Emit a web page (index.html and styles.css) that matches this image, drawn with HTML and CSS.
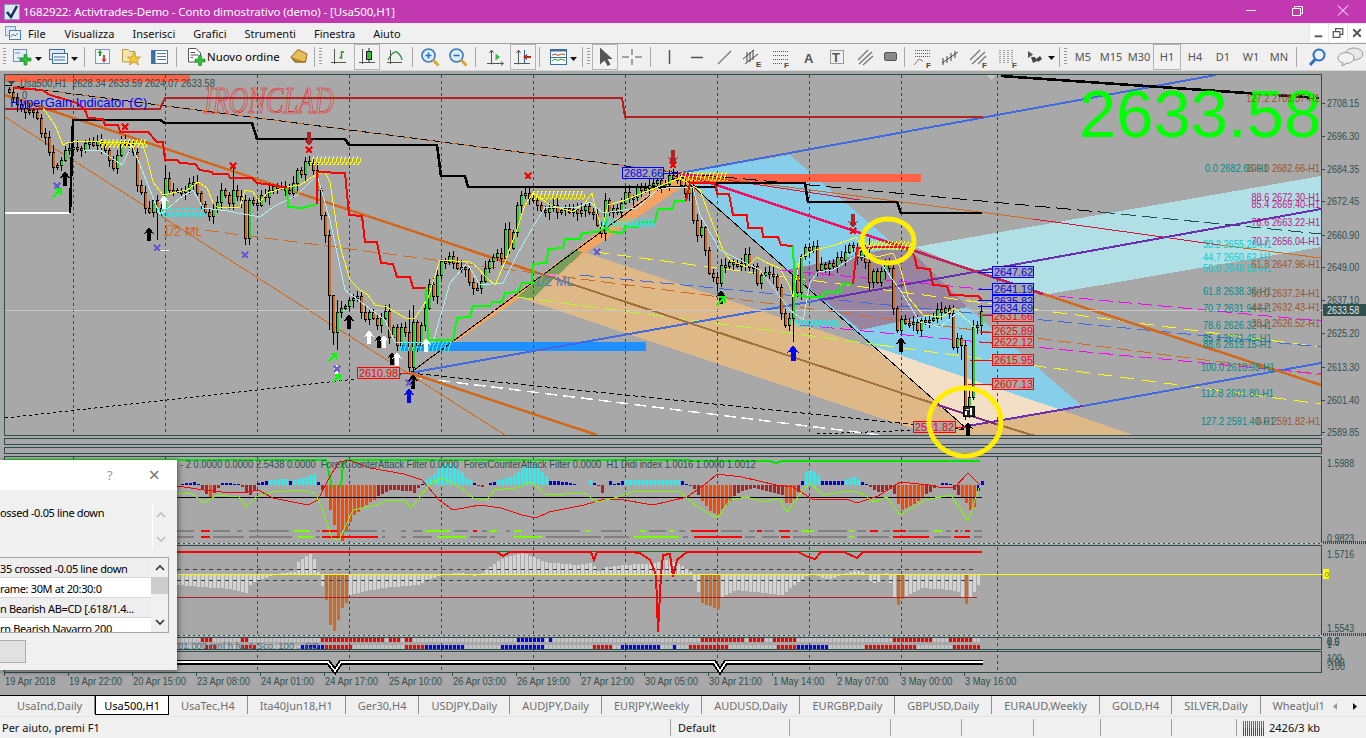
FILE: index.html
```html
<!DOCTYPE html>
<html lang="it">
<head>
<meta charset="utf-8">
<title>1682922: Activtrades-Demo - Conto dimostrativo (demo) - [Usa500,H1]</title>
<link rel="stylesheet" href="styles.css">
</head>
<body>
<div class="app">
  <header class="titlebar">
    <svg class="appicon" width="16" height="16" viewBox="0 0 16 16"><rect x="0.5" y="0.5" width="15" height="15" fill="#dfe6ee" stroke="#8aa0b8"/><path d="M3 8 L7 13 L13 2" fill="none" stroke="#13355e" stroke-width="2.6"/></svg>
    <span class="title">1682922: Activtrades-Demo - Conto dimostrativo (demo) - [Usa500,H1]</span>
    <span class="winctl">
      <svg width="46" height="23" viewBox="0 0 46 23"><path d="M18 10.5H28" stroke="#fff"/></svg>
      <svg width="46" height="23" viewBox="0 0 46 23"><path d="M18.5 8.5H26.5V15.5H18.5Z M20.5 8V6.5H28.5V13.5H27" fill="none" stroke="#fff"/></svg>
      <svg width="46" height="23" viewBox="0 0 46 23"><path d="M18 5.5 L28 15.5 M28 5.5 L18 15.5" stroke="#fff"/></svg>
    </span>
  </header>
  <nav class="menubar">
    <svg class="docicon" width="16" height="16" viewBox="0 0 16 16"><rect x="0.5" y="1.5" width="10" height="9" fill="#dbe8f6" stroke="#7c9cc4"/><rect x="4.5" y="5.5" width="11" height="9" fill="#eef4fb" stroke="#4f7fb8"/><path d="M6 12 L8 9 L10 11 L13 8" fill="none" stroke="#4f7fb8"/></svg>
    <span class="menu m1">File</span><span class="menu m2">Visualizza</span><span class="menu">Inserisci</span><span class="menu">Grafici</span><span class="menu">Strumenti</span><span class="menu">Finestra</span><span class="menu">Aiuto</span>
    <span class="mdictl">
      <svg width="19" height="18" viewBox="0 0 19 18"><path d="M5 12.5H13" stroke="#555" stroke-width="2"/></svg>
      <svg width="19" height="18" viewBox="0 0 19 18"><path d="M4.5 7.5H11.5V13.5H4.5Z M7 7V4.5H14.5V10.5H12" fill="none" stroke="#555" stroke-width="1.3"/></svg>
      <svg width="19" height="18" viewBox="0 0 19 18"><path d="M5.5 5 L13.5 13 M13.5 5 L5.5 13" stroke="#555" stroke-width="2"/></svg>
    </span>
  </nav>
  <div class="toolbar">
    <span class="grip"></span>
    <svg width="35" height="26" viewBox="0 0 35 26"><rect x="5.5" y="5.5" width="13" height="12" fill="#e6eef8" stroke="#6f8fb5"/><path d="M7 9H12M9 14H15" stroke="#6f8fb5"/><path d="M14 12H18V8.5H21V12H25V15H21V19H18V15H14Z" fill="#2fbf3a" stroke="#1d8a26" stroke-width="0.7" transform="translate(-2 2)"/><path d="M27 13H34L30.5 17Z" fill="#111"/></svg>
    <svg width="38" height="26" viewBox="0 0 38 26"><rect x="6.5" y="5.5" width="15" height="10" fill="#dfe9f5" stroke="#3e6da5"/><rect x="9.5" y="9.5" width="15" height="10" fill="#eef4fb" stroke="#3e6da5"/><path d="M11 13H22M11 16H22" stroke="#3e6da5"/><path d="M28 13H35L31.5 17Z" fill="#111"/></svg>
    <span class="sep"></span>
    <svg width="26" height="26" viewBox="0 0 26 26"><rect x="6.5" y="5.5" width="14" height="14" fill="#f2f6fb" stroke="#7c9cc4"/><path d="M10 12V9H8.5L11 6L13.5 9H12V12Z" fill="#1f9e2a"/><path d="M14 11V15H12.5L15 19L17.500 15H16V11Z" fill="#d0402a"/></svg>
    <svg width="30" height="26" viewBox="0 0 30 26"><path d="M7.500 5.500H13L15 7.500H20V18H7.500Z" fill="#f3e3a8" stroke="#b59a4c"/><path d="M19 8.500L21 13H25.500L22 16L23.500 21L19 18L14.500 21L16 16L12.500 13H17Z" fill="#f5c83a" stroke="#b58b1c" stroke-width="0.7"/></svg>
    <svg width="28" height="26" viewBox="0 0 28 26"><rect x="6.500" y="6.500" width="16" height="13" fill="#fff" stroke="#58779c"/><rect x="6.500" y="6.500" width="4" height="13" fill="#3e6da5"/><path d="M12 9.500H21M12 12.500H21M12 15.500H21" stroke="#58779c"/></svg>
    <span class="sep"></span>
    <svg width="26" height="26" viewBox="0 0 26 26"><path d="M7.500 4.500H15L19.500 9V18H7.500Z" fill="#fff" stroke="#555"/><path d="M9.500 8.500H14M9.500 11H17M9.500 13.500H12" stroke="#555"/><path d="M14 15H17.500V11.500H20.500V15H24V18H20.500V21.500H17.500V18H14Z" fill="#2fbf3a" stroke="#1d8a26" stroke-width="0.7"/></svg>
    <span class="order">Nuovo ordine</span>
    <svg width="25" height="26" viewBox="0 0 25 26"><path d="M5 13 L12 5.500 L21 10 L19.500 18 L9 18Z" fill="#e6bd58" stroke="#8d6a1e"/><path d="M5 13 L9 18 L19.500 18" fill="#b98a2a" stroke="#8d6a1e"/></svg>
    <span class="sep"></span>
    <span class="grip"></span>
    <svg width="30" height="26" viewBox="0 0 30 26"><path d="M10.500 5V20M7 18.500H22" stroke="#555" fill="none"/><path d="M17.500 7V15M15.500 13.500H17.500M17.500 8H20" stroke="#1e9a2a" fill="none" stroke-width="1.4"/></svg>
    <span class="btn act"><svg width="26" height="26" viewBox="0 0 26 26"><path d="M8.500 5V20M5 18.500H21" stroke="#555" fill="none"/><path d="M15 4V18" stroke="#222"/><rect x="12.500" y="7.500" width="5" height="8" fill="#2fbf3a" stroke="#222"/></svg></span>
    <svg width="29" height="26" viewBox="0 0 29 26"><path d="M10.500 6V20M7 18.500H22" stroke="#555" fill="none"/><path d="M8 16 Q14 5 18 9 T22 16" stroke="#1e8a2a" fill="none" stroke-width="1.2"/></svg>
    <span class="sep"></span>
    <svg width="27" height="26" viewBox="0 0 27 26"><circle cx="11.500" cy="11.500" r="6.500" fill="#dcecfb" stroke="#3e78b8" stroke-width="1.600"/><path d="M8.500 11.500H14.500M11.500 8.500V14.500" stroke="#2a6fb8" stroke-width="1.600"/><path d="M16 16L21.500 21.500" stroke="#d9a62e" stroke-width="3"/></svg>
    <svg width="28" height="26" viewBox="0 0 28 26"><circle cx="12.500" cy="11.500" r="6.500" fill="#dcecfb" stroke="#3e78b8" stroke-width="1.600"/><path d="M9.500 11.500H15.500" stroke="#2a6fb8" stroke-width="1.600"/><path d="M17 16L22.500 21.500" stroke="#d9a62e" stroke-width="3"/></svg>
    <span class="sep"></span>
    <svg width="30" height="26" viewBox="0 0 30 26"><path d="M11.500 7V20.500M7 19.500H23M9.500 9L11.500 6L13.500 9M21 17.500L23.500 19.500L21 21.500" stroke="#555" fill="none"/><path d="M15.500 9.500L20 13L15.500 16.500Z" fill="#2fbf3a"/></svg>
    <span class="btn act"><svg width="26" height="26" viewBox="0 0 26 26"><path d="M8.500 7V20.500M4 19.500H20M6.500 9L8.500 6L10.500 9" stroke="#555" fill="none"/><path d="M14.500 6V20" stroke="#2a5f9e"/><path d="M21 12H17V10L13 13L17 16V14H21Z" fill="#b5301a"/></svg></span>
    <span class="sep"></span>
    <svg width="35" height="26" viewBox="0 0 35 26"><rect x="6.500" y="5.500" width="16" height="15" fill="#fff" stroke="#3e6da5"/><rect x="6.500" y="5.500" width="16" height="2" fill="#3e6da5"/><path d="M8 11 L11 10 L14 11.500 L17 10 L21 10.500" stroke="#c0401a" fill="none"/><path d="M8 17 L11 15 L14 16.500 L17 15 L21 16.500" stroke="#1e9a2a" fill="none"/><path d="M6.500 13.500H22.500" stroke="#3e6da5"/><path d="M26 13H33L29.500 17Z" fill="#111"/></svg>
    <span class="sep"></span>
    <span class="grip"></span>
    <span class="btn act"><svg width="26" height="26" viewBox="0 0 26 26"><path d="M8 3.500V20.500L12.500 16.500L15.500 22L18.500 20.500L15.500 15H20.500Z" fill="#555"/></svg></span>
    <svg width="29" height="26" viewBox="0 0 29 26"><path d="M14 5V11M14 15V21M4 13H11M17 13H24" stroke="#555"/></svg>
    <span class="sep"></span>
    <svg width="28" height="26" viewBox="0 0 28 26"><path d="M14.500 6V20" stroke="#555" stroke-width="1.500"/></svg>
    <svg width="28" height="26" viewBox="0 0 28 26"><path d="M8 13.500H20" stroke="#555" stroke-width="1.500"/></svg>
    <svg width="28" height="26" viewBox="0 0 28 26"><path d="M7 20L20 7" stroke="#777" stroke-width="1.300"/></svg>
    <svg width="28" height="26" viewBox="0 0 28 26"><path d="M4 15L15 6M6 20L19 10M8 8V18M11 8V18M14 6V16" stroke="#444" fill="none"/><text class="tool-l" x="17" y="23">E</text></svg>
    <svg width="28" height="26" viewBox="0 0 28 26"><path d="M6 7.500H21M6 11.500H21M6 15.500H21M6 19.500H16" stroke="#555" stroke-dasharray="1 1" fill="none"/><text class="tool-l" x="17" y="24">F</text></svg>
    <svg width="28" height="26" viewBox="0 0 28 26"><text class="tool-a" x="9" y="19">A</text></svg>
    <svg width="28" height="26" viewBox="0 0 28 26"><rect x="7.500" y="6.500" width="13" height="13" fill="none" stroke="#444" stroke-dasharray="1 1"/><text class="tool-a" x="9" y="18">T</text></svg>
    <svg width="28" height="26" viewBox="0 0 28 26"><path d="M7 16L17 6M8 20L21 8M12 21L22 12" stroke="#777" stroke-width="1.300"/></svg>
    <svg width="22" height="26" viewBox="0 0 22 26"><rect x="5.500" y="8.500" width="12" height="8" rx="1.500" fill="#8a8a8a" stroke="#555"/></svg>
    <span class="sep"></span>
    <svg width="27" height="26" viewBox="0 0 27 26"><path d="M6 6.500H21M6 9.500H21M6 12.500H21" stroke="#555" stroke-dasharray="1 1"/><path d="M5 21L10 15L14 17" stroke="#777" fill="none"/><text class="tool-l" x="17" y="24">F</text></svg>
    <svg width="28" height="26" viewBox="0 0 28 26"><path d="M6 19L22 8M7 14V21M11 12V19M15 9V17M19 7V14" stroke="#444" fill="none"/></svg>
    <svg width="29" height="26" viewBox="0 0 29 26"><path d="M6 16L16 6M8 20L21 8M14 20L22 12" stroke="#777" stroke-width="1.300"/><text class="tool-l" x="18" y="24">F</text></svg>
    <svg width="28" height="26" viewBox="0 0 28 26"><path d="M7 6V20M11 6V20M15 6V20M19 6V20" stroke="#555" stroke-dasharray="1 1"/><text class="tool-l" x="19" y="24">F</text></svg>
    <svg width="35" height="26" viewBox="0 0 35 26"><path d="M7 7L12 10.500L7 14Z" fill="#555"/><path d="M10 13H14L16 17L12 19Z M15 15L19 12L21 15L17 18Z" fill="#444"/><path d="M27 12H34L30.500 16Z" fill="#111"/></svg>
    <span class="sep"></span>
    <span class="grip"></span>
    <span class="tf">M5</span><span class="tf">M15</span><span class="tf">M30</span><span class="tf act">H1</span><span class="tf">H4</span><span class="tf">D1</span><span class="tf">W1</span><span class="tf">MN</span>
    <span class="sep"></span>
    <svg width="34" height="26" viewBox="0 0 34 26"><circle cx="18" cy="11" r="5.500" fill="#eaf3fd" stroke="#2a6fc4" stroke-width="2"/><path d="M14 15.500L9 21" stroke="#2a6fc4" stroke-width="3"/></svg>
    <svg width="31" height="26" viewBox="0 0 31 26"><ellipse cx="19" cy="10" rx="9" ry="6" fill="#e8e8e8" stroke="#9a9a9a"/><ellipse cx="11" cy="14" rx="8" ry="5.500" fill="#f2f2f2" stroke="#9a9a9a"/><path d="M8 19L7 22L12 19" fill="#f2f2f2" stroke="#9a9a9a"/></svg>
  </div>

  <main class="chart">
    <svg class="canvas" width="1366" height="624" viewBox="0 71 1366 624">
      <defs>
        <symbol id="up" viewBox="0 0 12 16"><path d="M6 0L12 8L8.500 6.500V16H3.500V6.500L0 8Z"/></symbol>
        <symbol id="down" viewBox="0 0 12 16"><path d="M6 16L12 8L8.500 9.500V0H3.500V9.500L0 8Z"/></symbol>
        <symbol id="xm" viewBox="0 0 8 8"><path d="M1 1L7 7M7 1L1 7" stroke="currentColor" stroke-width="2" fill="none"/></symbol>
        <symbol id="ne" viewBox="0 0 12 12"><path d="M1 11L10 2M3 2H10V9" stroke="#00ff00" stroke-width="2" fill="none"/></symbol>
        <pattern id="hy" width="4" height="9" patternUnits="userSpaceOnUse"><path d="M0 9L3 0" stroke="#ffff00" stroke-width="1.300"/></pattern>
        <pattern id="hc" width="4" height="9" patternUnits="userSpaceOnUse"><path d="M0 9L3 0" stroke="#19f0f0" stroke-width="1.300"/></pattern>
        <clipPath id="mainclip"><rect x="5" y="75" width="1316" height="360"/></clipPath>
      </defs>

      <g class="frames">
        <rect x="4.500" y="74.500" width="1317" height="361"/>
        <rect x="4.500" y="438.500" width="1317" height="6"/>
        <rect x="4.500" y="447.500" width="1317" height="6"/>
        <rect x="4.500" y="456.500" width="1317" height="87"/>
        <rect x="4.500" y="545.500" width="1317" height="90"/>
        <rect x="4.500" y="637.500" width="1317" height="12"/>
        <rect x="4.500" y="651.500" width="1317" height="21"/>
      </g>

      <g clip-path="url(#mainclip)">
        <rect x="5" y="75" width="185" height="7" fill="#ff6347"/>
        <polygon points="915,247 1321,176 1321,247 1043,295 966,268" fill="#b0e0e6"/>
        <polygon points="680,173 790,155 1081,405 1061,410 870,345" fill="#87ceeb"/>
        <polygon points="583,252 1061,410 1136,436 935,436 517,297" fill="#deb887"/>
        <polygon points="870,345 1061,410 965,427" fill="#f2dfc6"/>
        <polygon points="787,270 882,250 910,250 967,307 860,330" fill="#9a85a0"/>
        <polygon points="410,373 677,172 692,180" fill="#f4a460"/>
        <polygon points="517,297 573,250 583,252 533,298" fill="#7ba05b"/>
        <rect x="400" y="342" width="246" height="9" fill="#1e90ff"/>
        <rect x="685" y="174" width="236" height="8" fill="#ff6347"/>
      </g>

      <g class="grid" id="grid"></g>

      <g clip-path="url(#mainclip)" fill="none">
        <path class="ln" d="M5 85L680 173" stroke="#d2691e"/>
        <path class="ln" d="M5 85L680 173" stroke="#000" stroke-dasharray="7 5"/>
        <path class="ln" d="M680 173L1033 219" stroke="#d2691e"/>
        <path class="ln" d="M1033 219L1220 245" stroke="#dc143c"/>
        <path class="ln" d="M1220 245L1321 258" stroke="#d2691e"/>
        <path class="ln" d="M680 173L1100 212" stroke="#000" stroke-dasharray="15 6"/>
        <path class="ln" d="M1100 212L1321 234" stroke="#1f4f4f" stroke-dasharray="15 6"/>
        <path class="ln" d="M5 117L505 435" stroke="#d2691e"/>
        <path class="ln" d="M5 418L410 373" stroke="#000" stroke-dasharray="3 3"/>
        <path class="ln" d="M410 373L968 430" stroke="#000" stroke-dasharray="5 3"/>
        <path class="ln" d="M817 434L968 428" stroke="#000" stroke-dasharray="3 3"/>
        <path class="ln2" d="M420 378L880 435" stroke="#fff" stroke-dasharray="12 6"/>
        <path class="ln" d="M410 373L678 175" stroke="#000"/>
        <path class="ln" d="M680 175L968 430" stroke="#000"/>
        <path class="ln" d="M165 225L1321 375" stroke="#d2691e" stroke-dasharray="14 6"/>
        <path class="ln" d="M595 252L1321 347" stroke="#ffff00" stroke-dasharray="14 8"/>
        <path class="ln" d="M517 297L880 345" stroke="#adff2f" stroke-dasharray="16 6"/>
        <path class="ln" d="M880 345L1321 404" stroke="#ffff00" stroke-dasharray="14 8"/>
        <path class="ln" d="M580 275L1321 347" stroke="#4169e1" stroke-dasharray="14 6"/>
        <path class="ln" d="M780 270L1321 321" stroke="#ff00ff" stroke-dasharray="14 6"/>
        <path class="ln" d="M800 325L1321 374" stroke="#ff00ff" stroke-dasharray="14 6"/>
        <path class="ln" d="M680 173L860 200" stroke="#dc143c"/>
        <path class="ln2" d="M540 275H558" stroke="#ff7fd0"/>
        <path class="thick" d="M680 173L1216 75" stroke="#4169e1"/>
        <path class="thick" d="M410 373L820 300" stroke="#4169e1"/>
        <path class="thick" d="M820 300L1321 209" stroke="#6a2fb0"/>
        <path class="thick" d="M962 427L1083 406" stroke="#6a2fb0"/>
        <path class="thick" d="M1083 406L1321 363" stroke="#4169e1"/>
        <path class="wide" d="M5 95L535 272" stroke="#d2691e"/>
        <path class="thick" d="M535 272L938 405" stroke="#a0703a"/>
        <path class="thick" d="M938 405L996 424" stroke="#7a2a7a"/>
        <path class="thick" d="M996 424L1035 436" stroke="#a0703a"/>
        <path class="wide" d="M680 173L915 251" stroke="#ee1166"/>
        <path class="wide" d="M915 251L1043 294" stroke="#c0245c"/>
        <path class="wide" d="M1043 294L1321 385" stroke="#d2691e"/>
        <path class="wide" d="M410 373L597 435" stroke="#d2691e"/>
        <path class="thick" d="M5 109H160L165 98H622L625 117H983" stroke="#b22222"/>
        <path class="wide" d="M1001 76L1319 98" stroke="#000"/>
      </g>

      <text class="bigprice" x="1079" y="137">2633.58</text>
      <path class="ln" d="M5 310H1322" stroke="#c8c8c8" fill="none"/>

      <g fill="none">
        <path class="thick" d="M5 213H70" stroke="#fff"/>
        <path class="wide" d="M70 213L73 120H160L165 123H252L257 139H345L349 145H437L441 176H465L468 187H715L717 183H805L808 202H897L901 213H982" stroke="#000"/>
      </g>

      <g id="candles"></g>

      <g fill="none" class="ma">
        <polyline stroke="#ffff00" points="43,108 55,125 63,145 67,143 80,141 100,142 127,143 142,143 147,158 153,182 163,195 187,190 198,182 207,188 213,203 217,207 240,207 245,190 253,192 260,202 267,193 287,187 300,185 315,175 325,172 330,182 338,235 342,253 350,280 360,290 368,295 375,305 387,307 405,318 415,318 428,298 440,260 470,262 477,267 487,278 495,285 505,262 515,235 525,205 533,193 543,200 550,205 560,208 573,212 585,203 592,193 595,207 602,230 608,205 625,200 650,190 680,178 700,190 710,217 723,250 730,260 747,267 757,257 765,262 780,268 790,287 793,297 800,258 815,250 835,245 857,237 862,250 877,257 893,253 900,267 908,297 923,315 943,317 955,308 967,320 977,330"/>
        <polyline stroke="#afeeee" points="83,150 100,150 122,165 132,145 160,215 180,198 193,190 203,208 220,210 233,212 260,217 273,207 297,195 317,175 330,220 345,290 385,320 395,342 433,342 450,283 467,263 480,285 503,283 518,253 533,227 545,207 575,208 590,202 603,213 637,208 657,190 670,187 693,188 700,215 720,250 760,270 790,310 803,320 810,283 818,272 833,270 857,255 880,262 900,290 920,322 940,327 957,313 970,322"/>
      </g>

      <g fill="none" class="steps">
        <polyline stroke="#ff0000" points="13,88 42,90 50,95 67,100 77,103 85,110 88,118 103,119 105,125 118,125 120,132 148,132 157,142 163,142 165,160 177,160 180,163 195,164 200,170 212,172 213,174 228,174 230,178 252,178 257,183 272,185 287,188"/>
        <polyline stroke="#00ff00" points="287,188 288,207 302,208 317,204"/>
        <polyline stroke="#ff0000" points="317,204 317,172 345,173 349,215 362,216 365,242 377,242 381,263 393,264 397,277 410,277 413,288 426,288"/>
        <polyline stroke="#00ff00" points="426,288 428,340 453,340 457,318 470,317 473,306 490,306 493,302 502,302 505,293 518,292 522,283 532,283 533,264 547,263 548,249 563,248 565,239 580,239 582,233 597,232 607,227 610,232 623,233 625,227 638,227 640,222 655,222 658,209 672,209 675,201 686,201"/>
        <polyline stroke="#ff0000" points="686,201 690,183 715,183 717,194 729,194 733,215 747,215 748,228 762,228 763,237 778,237 781,245 793,246"/>
        <polyline stroke="#00ff00" points="793,246 795,295 808,297 822,297 825,292 840,292 842,284 853,284"/>
        <polyline stroke="#ff0000" points="853,284 857,248 887,247 910,248 915,258 917,268 930,269 933,285 947,286 950,295 978,296 982,300"/>
      </g>

      <g>
        <rect x="100" y="139" width="47" height="9" fill="url(#hy)"/>
        <rect x="310" y="156" width="51" height="9" fill="url(#hy)"/>
        <rect x="532" y="191" width="53" height="9" fill="url(#hy)"/>
        <rect x="680" y="172" width="48" height="9" fill="url(#hy)"/>
        <rect x="866" y="241" width="45" height="9" fill="url(#hy)"/>
        <rect x="157" y="208" width="48" height="9" fill="url(#hc)"/>
        <rect x="600" y="218" width="55" height="9" fill="url(#hc)"/>
        <rect x="795" y="319" width="45" height="9" fill="url(#hc)"/>
        <rect x="400" y="342" width="52" height="9" fill="url(#hc)"/>
      </g>

      <g class="blk">
        <use href="#up" x="59" y="171" width="12" height="15"/>
        <use href="#up" x="143" y="227" width="12" height="14"/>
        <use href="#up" x="343" y="314" width="12" height="15"/>
        <use href="#up" x="407" y="374" width="12" height="15"/>
        <use href="#up" x="715" y="290" width="12" height="14"/>
        <use href="#up" x="895" y="337" width="12" height="15"/>
        <use href="#up" x="962" y="422" width="12" height="14"/>
        <use href="#up" x="374" y="335" width="10" height="13"/>
        <use href="#up" x="387" y="352" width="10" height="13"/>
      </g>
      <g class="blu">
        <use href="#up" x="403" y="388" width="12" height="15"/>
        <use href="#up" x="787" y="345" width="12" height="16"/>
      </g>
      <g class="wht">
        <use href="#up" x="158" y="195" width="12" height="14"/>
        <use href="#up" x="363" y="330" width="12" height="14"/>
        <use href="#up" x="378" y="335" width="12" height="13"/>
        <use href="#up" x="391" y="352" width="12" height="14"/>
        <use href="#up" x="420" y="338" width="12" height="14"/>
        <use href="#up" x="331" y="365" width="11" height="9"/>
      </g>
      <g class="drd">
        <use href="#down" x="303" y="132" width="12" height="14"/>
        <use href="#down" x="667" y="150" width="12" height="14"/>
        <use href="#down" x="847" y="214" width="12" height="14"/>
      </g>
      <g class="xr">
        <use href="#xm" x="121" y="123" width="8" height="8"/>
        <use href="#xm" x="229" y="162" width="8" height="8"/>
        <use href="#xm" x="305" y="146" width="8" height="8"/>
        <use href="#xm" x="524" y="172" width="8" height="8"/>
        <use href="#xm" x="669" y="161" width="8" height="8"/>
        <use href="#xm" x="849" y="227" width="8" height="8"/>
      </g>
      <g class="xp">
        <use href="#xm" x="53" y="182" width="8" height="8"/>
        <use href="#xm" x="153" y="244" width="8" height="8"/>
        <use href="#xm" x="241" y="251" width="8" height="8"/>
        <use href="#xm" x="593" y="248" width="8" height="8"/>
        <use href="#xm" x="333" y="365" width="8" height="8"/>
        <use href="#xm" x="405" y="379" width="8" height="8"/>
      </g>
      <use href="#ne" x="52" y="187" width="11" height="11"/>
      <use href="#ne" x="328" y="352" width="10" height="10"/>
      <use href="#ne" x="332" y="373" width="10" height="10"/>
      <use href="#ne" x="716" y="295" width="11" height="11"/>
      <path class="ln" d="M161 250H169" stroke="#fff" fill="none"/>

      <polygon points="986,75 996,75 991,80" fill="#c4c4c4"/>
      <polygon points="8,81 15,81 11.500,85" fill="#2f4f4f"/>
      <text class="legend" x="20" y="87">Usa500,H1  2628.34 2633.59 2624.07 2633.58</text>
      <text class="legend" x="22" y="99">0</text>
      <text class="hg" x="10" y="107">HyperGain Indicator (C)</text>
      <text class="iron" x="204" y="113" textLength="130" lengthAdjust="spacingAndGlyphs">IRONCLAD</text>
      <text class="mlo" x="163" y="236">1/2 ML</text>
      <text class="mlb" x="534" y="286">1/2 ML</text>

      <g class="fib">
        <text class="ft" x="1205" y="172">0.0 2682.66-H1</text>
        <text class="fc" x="1203" y="248">38.2 2655.28-H1</text>
        <text class="fc" x="1203" y="261">44.7 2650.62-H1</text>
        <text class="fc" x="1203" y="272">50.0 2646.82-H1</text>
        <text class="ft" x="1203" y="295">61.8 2638.36-H1</text>
        <text class="ft" x="1203" y="312">70.7 2631.94-H1</text>
        <text class="ft" x="1203" y="329">78.6 2626.32-H1</text>
        <text class="ft" x="1203" y="342">85.4 2621.45-H1</text>
        <text class="ft" x="1203" y="348">88.6 2619.15-H1</text>
        <text class="ft" x="1201" y="371">100.0 2610.98-H1</text>
        <text class="ft" x="1201" y="397">112.8 2601.80-H1</text>
        <text class="ft" x="1201" y="425">127.2 2591.40-H1</text>
        <text class="fs e" x="1320" y="102">127.2 2708.37-H1</text>
        <text class="fs e" x="1320" y="172">100.0 2682.66-H1</text>
        <text class="fm e" x="1320" y="201">88.6 2672.30-H1</text>
        <text class="fm e" x="1320" y="208">85.4 2669.40-H1</text>
        <text class="fm e" x="1320" y="226">78.6 2663.22-H1</text>
        <text class="fm e" x="1320" y="245">70.7 2656.04-H1</text>
        <text class="fs e" x="1320" y="268">61.8 2647.96-H1</text>
        <text class="fs e" x="1320" y="297">50.0 2637.24-H1</text>
        <text class="fs e" x="1320" y="311">44.7 2632.43-H1</text>
        <text class="fs e" x="1320" y="327">38.2 2626.52-H1</text>
        <text class="fs e" x="1320" y="425">0.0 2591.82-H1</text>
      </g>

      <g fill="none" class="conn">
        <path d="M978 272H992M978 289H992M978 300H992M978 306H992" stroke="#0000ff"/>
        <path d="M980 315H992M980 332H992M980 342H992M970 360H992M968 384H992M956 427H966M400 373H410" stroke="#ff0000"/>
        <path d="M664 173H680" stroke="#0000ff"/>
      </g>
      <g class="pboxes">
        <rect class="bb" x="992.500" y="295.500" width="41" height="11"/><text class="tb" x="994" y="305">2635.82</text>
        <rect class="bb" x="992.500" y="266.500" width="41" height="11"/><text class="tb" x="994" y="276">2647.62</text>
        <rect class="bb" x="992.500" y="283.500" width="41" height="11"/><text class="tb" x="994" y="293">2641.19</text>
        <rect class="rb" x="992.500" y="310.500" width="41" height="11"/><text class="tr" x="994" y="320">2631.66</text>
        <rect class="bb" x="992.500" y="302.500" width="41" height="11"/><text class="tb" x="994" y="312">2634.69</text>
        <rect class="rb" x="992.500" y="325.500" width="41" height="11"/><text class="tr" x="994" y="335">2625.89</text>
        <rect class="rb" x="992.500" y="336.500" width="41" height="11"/><text class="tr" x="994" y="346">2622.12</text>
        <rect class="rb" x="992.500" y="354.500" width="41" height="11"/><text class="tr" x="994" y="364">2615.95</text>
        <rect class="rb" x="992.500" y="378.500" width="41" height="11"/><text class="tr" x="994" y="388">2607.13</text>
        <rect class="bb" x="622.500" y="167.500" width="41" height="11"/><text class="tb" x="624" y="177">2682.66</text>
        <rect class="rb" x="357.500" y="367.500" width="42" height="11"/><text class="tr" x="359" y="377">2610.98</text>
        <rect class="rb" x="913.500" y="421.500" width="42" height="11"/><text class="tr" x="915" y="431">2591.82</text>
      </g>
      <ellipse class="ring" cx="888" cy="241" rx="26" ry="22"/>
      <ellipse class="ring" cx="965" cy="422" rx="36" ry="34"/>

      <rect x="963.500" y="406.500" width="11" height="10" fill="#222" stroke="#000"/>
      <path d="M965 415V411H967V415ZM970 415V408H972V415ZM966 409H969V410H966Z" fill="#fff"/>

      <g id="w1"></g>
      <path class="thick" d="M5 460H326L332 487M341 487L343 464L347 460H680L700 461H770L776 463L782 461H980" stroke="#00e600" fill="none"/>
      <path class="ln" d="M5 497H982" stroke="#000" fill="none"/>
      <polyline class="ma" fill="none" stroke="#ff0000" points="177,486 204,490 222,492 242,493 258,490 273,498 308,505 318,500 329,478 339,462 349,460 370,468 404,474 422,480 439,500 453,510 480,505 501,508 522,515 536,518 549,512 584,505 601,500 618,499 653,505 687,497 708,482 717,474 742,477 776,485 793,487 812,499 849,500 857,503 878,496 900,482 929,485 938,487 955,487 968,473 980,485"/>
      <polyline class="ma" fill="none" stroke="#7cfc00" points="177,493 191,493 204,503 217,495 239,497 246,507 256,497 273,492 301,490 315,493 322,508 332,538 339,540 353,510 367,507 377,505 387,500 404,500 411,508 429,485 442,478 460,487 473,498 487,500 494,490 515,488 532,482 546,495 584,493 597,502 618,497 635,491 680,492 698,507 708,513 717,518 730,500 747,497 764,502 779,498 787,512 798,497 810,483 823,495 849,491 861,493 874,502 887,497 900,515 925,500 951,495 963,513 968,521 980,485"/>
      <text class="legend" x="180" y="468">- 2 0.0000 0.0000 2.5438 0.0000  ForexCounterAttack Filter 0.0000  ForexCounterAttack Filter 0.0000  H1 Didi index 1.0016 1.0000 1.0012</text>
      <path class="dsh" d="M5 543H1322M5 635H1322"/>
      <path class="dsh2" d="M1323 542H1366M1323 634H1366"/>

      <g id="w2"></g>
      <path class="ln" d="M177 551H982" stroke="#1f6f2f" fill="none"/>
      <path class="thick" fill="none" stroke="#ff0000" d="M177 552H497L503 556L510 552H591L594 560L597 552H629L640 553L650 560L653 567L656 575L658 632L661 575L663 555L670 554L673 577L677 560L687 552H798L808 557L815 559L821 552H844L857 558L863 552H982"/>
      <path class="ln" d="M177 597H977" stroke="#b22222" fill="none"/>
      <path class="dk" d="M177 569H975M177 580H975"/>
      <path class="ylw" d="M177 574.500H1322"/>
      <rect x="1323" y="569" width="6" height="10" fill="#ffff00"/>
      <text class="axis-s" x="1324.500" y="577">0</text>

      <g id="w3"></g>
      <text class="faint" x="178" y="649">01.000 mnl h fu. 1 Sco. 100 .. CO</text>
      <path class="wb" d="M177 662H328L335 671L341 662H714L720 671L726 662H983"/>
      <path class="wt" d="M177 662H328L335 671L341 662H714L720 671L726 662H983"/>

      <g id="axes"></g>
    </svg>

    <section class="dialog">
      <div class="dlg-head"><span class="q">?</span><span class="x">×</span></div>
      <div class="dlg-body">
        <div class="dlg-msg">
          <span class="msg">ossed -0.05 line down</span>
          <span class="chev">
            <svg width="10" height="8" viewBox="0 0 10 8"><path d="M1 6L5 2L9 6" fill="none" stroke="#c0c0c0" stroke-width="1.600"/></svg>
            <svg width="10" height="8" viewBox="0 0 10 8"><path d="M1 2L5 6L9 2" fill="none" stroke="#c0c0c0" stroke-width="1.600"/></svg>
          </span>
        </div>
        <div class="dlg-list">
          <div class="rows">
            <div class="row alt">35 crossed -0.05 line down</div>
            <div class="row">rame: 30M at 20:30:0</div>
            <div class="row alt">n Bearish AB=CD [.618/1.4...</div>
            <div class="row">rn Bearish Navarro 200</div>
          </div>
          <div class="sb">
            <svg width="10" height="8" viewBox="0 0 10 8"><path d="M1 6L5 2L9 6" fill="none" stroke="#333" stroke-width="1.600"/></svg>
            <span class="thumb"></span>
            <svg class="sbd" width="10" height="8" viewBox="0 0 10 8"><path d="M1 2L5 6L9 2" fill="none" stroke="#333" stroke-width="1.600"/></svg>
          </div>
        </div>
        <div class="dlg-btn"></div>
      </div>
    </section>
  </main>

  <div class="tabs">
    <div class="tablist">
      <span class="tab">UsaInd,Daily</span><span class="tab on">Usa500,H1</span><span class="tab">UsaTec,H4</span><span class="tab">Ita40Jun18,H1</span><span class="tab">Ger30,H4</span><span class="tab">USDJPY,Daily</span><span class="tab">AUDJPY,Daily</span><span class="tab">EURJPY,Weekly</span><span class="tab">AUDUSD,Daily</span><span class="tab">EURGBP,Daily</span><span class="tab">GBPUSD,Daily</span><span class="tab">EURAUD,Weekly</span><span class="tab">GOLD,H4</span><span class="tab">SILVER,Daily</span><span class="tab">WheatJul18,Daily</span>
    </div>
    <div class="tabarrows">
      <svg width="20" height="21" viewBox="0 0 20 21"><path d="M12 7V14L8 10.500Z" fill="#999"/></svg>
      <svg width="20" height="21" viewBox="0 0 20 21"><path d="M8 7V14L12 10.500Z" fill="#111"/></svg>
    </div>
  </div>

  <footer class="status">
    <span class="cell">Per aiuto, premi F1</span>
    <span class="cell sepl">Default</span>
    <span class="cell sepl"></span><span class="cell sepl"></span><span class="cell sepl"></span><span class="cell sepl"></span><span class="cell sepl"></span><span class="cell sepl"></span>
    <span class="cell sepl conn-cell">
      <svg width="24" height="16" viewBox="0 0 24 16"><g id="connbars"></g></svg>
      <span>2426/3 kb</span>
    </span>
  </footer>
</div>
<script src="chart.js"></script>
</body>
</html>
```

FILE: styles.css
```css
* { box-sizing: border-box; }
html, body { margin: 0; padding: 0; }
body { width: 1366px; height: 738px; overflow: hidden; font-family: "Noto Sans", "Liberation Sans", sans-serif; font-size: 12px; color: #000; background: #f0f0f0; }
.app { display: flex; flex-direction: column; width: 1366px; height: 738px; }

.titlebar { flex: none; height: 23px; background: #c238b0; color: #fff; display: flex; align-items: center; padding-left: 4px; }
.appicon { flex: none; }
.title { margin-left: 3px; font-size: 11.500px; letter-spacing: -0.1px; white-space: nowrap; }
.winctl { margin-left: auto; display: flex; }

.menubar { flex: none; height: 21px; background: #f0f0f0; border-bottom: 1px solid #a0a0a0; display: flex; align-items: center; padding-left: 5px; }
.docicon { flex: none; }
.menu { font-size: 11px; color: #111; white-space: nowrap; margin-left: 18px; }
.m1 { margin-left: 7px; } .m2 { margin-left: 19px; }
.mdictl { margin-left: auto; display: flex; gap: 0; }
.mdictl svg { background: #fff; border-left: 1px solid #e8e8e8; }

.toolbar { flex: none; height: 27px; background: #f0f0f0; display: flex; align-items: stretch; padding-left: 3px; border-bottom: 1px solid #d8d8d8; }
.toolbar svg { flex: none; display: block; }
.grip { flex: none; width: 5px; margin: 4px 0; background: repeating-linear-gradient(#9a9a9a 0 1px, transparent 1px 3px); background-size: 3px 100%; background-repeat: no-repeat; }
.sep { flex: none; width: 8px; margin: 3px 0; }
.sep::before { content: ""; display: block; width: 1px; height: 100%; margin-left: 3px; background: #a8a8a8; }
.btn { flex: none; display: block; }
.act { box-shadow: inset 0 0 0 1px #b4b4b4; background: repeating-conic-gradient(#f8f8f8 0 25%, #ececec 0 50%) 0 0 / 2px 2px; }
.order { flex: none; width: 79px; line-height: 25px; font-size: 11.400px; color: #000; white-space: nowrap; }
.tf { flex: none; width: 28px; text-align: center; line-height: 26px; font-size: 11px; color: #555; }
.tool-l { font-family: "Liberation Sans", sans-serif; font-size: 8px; font-weight: 700; fill: #444; }
.tool-a { font-family: "Liberation Sans", sans-serif; font-size: 13px; font-weight: 700; fill: #555; }

.chart { flex: none; height: 624px; position: relative; background: #a8a8a8; overflow: hidden; }
.canvas { display: block; shape-rendering: crispEdges; }
.frames rect { fill: none; stroke: #2f4f4f; stroke-width: 1; }
.ln { stroke-width: 1; }
.ln2 { stroke-width: 1.500; }
.thick { stroke-width: 2; }
.wide { stroke-width: 2.600; }
.ma { stroke-width: 1; }
.steps polyline { stroke-width: 2; }
.grid path { stroke: #2f4f4f; stroke-dasharray: 3 3; fill: none; stroke-width: 1; }
.bigprice { font-family: "Liberation Sans", sans-serif; font-size: 67px; fill: #00ff00; }
.legend, .axis { font-family: "Liberation Sans", sans-serif; font-size: 10.500px; fill: #2f4f4f; white-space: pre; }
.axis.cur { fill: #e8e8e8; }
.axis-s { font-family: "Liberation Sans", sans-serif; font-size: 8px; fill: #7a7a00; }
.hg { font-family: "Liberation Sans", sans-serif; font-size: 13px; fill: #0000ff; }
.iron { font-family: "Liberation Serif", serif; font-style: italic; font-size: 38px; fill: none; stroke: #ff0000; stroke-width: 0.600; shape-rendering: auto; }
.mlo { font-family: "Liberation Sans", sans-serif; font-size: 13px; fill: #d2691e; }
.mlb { font-family: "Liberation Sans", sans-serif; font-size: 13px; fill: #4f78c8; }
.fib text { font-family: "Liberation Sans", sans-serif; font-size: 10.500px; }
.ft { fill: #008b8b; } .fc { fill: #00ced1; } .fs { fill: #a0522d; } .fm { fill: #c71585; }
.fib .e { text-anchor: end; }
.bb { fill: #a8a8a8; stroke: #0000ff; }
.rb { fill: #a8a8a8; stroke: #ff0000; }
.pboxes text { font-family: "Liberation Sans", sans-serif; font-size: 10.800px; }
.tb { fill: #0000ff; }
.tr { fill: #ff0000; }
.blk { fill: #000; } .blu { fill: #0000ff; } .wht { fill: #fff; } .drd { fill: #b22222; }
.xr { color: #ff0000; } .xp { color: #6a5acd; }
.ring { fill: none; stroke: #ffee00; stroke-width: 5; shape-rendering: auto; }
.dsh { stroke: #c4c4c4; stroke-dasharray: 3 2; fill: none; }
.dsh2 { stroke: #2f4f4f; stroke-dasharray: 1 1; stroke-width: 3; fill: none; }
.dk { stroke: #2f3f3f; stroke-dasharray: 4 4; fill: none; }
.ylw { stroke: #ffff00; stroke-width: 1.500; fill: none; }
.faint { font-family: "Liberation Sans", sans-serif; font-size: 9.500px; fill: #4f6f80; }
.wb { stroke: #000; stroke-width: 5; fill: none; }
.wt { stroke: #fff; stroke-width: 1.500; fill: none; }

.dialog { position: absolute; left: 0; top: 389px; width: 177px; height: 210px; background: #f0f0f0; box-shadow: 1px 1px 6px rgba(0,0,0,.55); display: flex; flex-direction: column; }
.dlg-head { flex: none; height: 30px; background: #fff; display: flex; align-items: center; justify-content: flex-end; color: #9a9a9a; }
.q { font-size: 13px; margin-right: 36px; }
.x { font-size: 20px; margin-right: 17px; line-height: 20px; color: #777; }
.dlg-body { flex: 1; display: flex; flex-direction: column; padding-top: 15px; }
.dlg-msg { flex: none; height: 44px; display: flex; justify-content: space-between; }
.msg { font-size: 11px; letter-spacing: -0.350px; line-height: 16px; white-space: nowrap; }
.chev { flex: none; width: 25px; border-left: 1px solid #fff; display: flex; flex-direction: column; align-items: center; justify-content: space-between; padding: 6px 8px 6px 0; }
.dlg-list { flex: none; width: 169px; height: 76px; margin-top: 8px; border: 1px solid #a6a6a6; border-left: none; display: flex; background: #fff; overflow: hidden; }
.rows { flex: 1; min-width: 0; }
.row { height: 20px; line-height: 21px; font-size: 11px; letter-spacing: -0.350px; white-space: nowrap; overflow: hidden; background: #fff; border-bottom: 1px solid #d8d8d8; }
.row.alt { background: #eee; }
.sb { flex: none; width: 17px; background: #f0f0f0; display: flex; flex-direction: column; align-items: center; padding-top: 6px; }
.thumb { display: block; width: 17px; height: 17px; margin-top: 5px; background: #cdcdcd; }
.sbd { margin-top: auto; margin-bottom: 6px; }
.dlg-btn { flex: none; width: 26px; height: 23px; margin-top: 7px; background: #e1e1e1; border: 1px solid #adadad; border-left: none; }

.tabs { flex: none; height: 21px; background: #f0f0f0; border-top: 1px solid #000; display: flex; }
.tablist { flex: 1; min-width: 0; display: flex; overflow: hidden; padding-left: 5px; }
.tab { flex: none; padding: 0 12px; line-height: 19px; height: 18px; font-size: 11px; color: #6f6f6f; white-space: nowrap; border-right: 1px solid #8f8f8f; }
.tab.on { color: #000; background: #fff; height: 19px; border: 1px solid #000; border-top: none; padding: 0 8px; }
.tabarrows { flex: none; width: 41px; display: flex; background: #f0f0f0; }

.status { flex: none; height: 22px; background: #f0f0f0; display: grid; grid-template-columns: 670px 119px 101px 71px 72px 67px 71px 65px 1fr; border-top: 1px solid #e4e4e4; }
.cell { line-height: 21px; font-size: 11px; padding-left: 2px; white-space: nowrap; overflow: hidden; color: #111; }
.sepl { border-left: 1px solid #a0a0a0; margin: 2px 0; line-height: 18px; padding-left: 7px; }
.conn-cell { display: flex; align-items: center; gap: 3px; padding-left: 5px; }
```

FILE: chart.js
```js
(function () {
  var NS = function (id, html) { document.getElementById(id).innerHTML = html; };

  /* grid and ticks */
  var gx = [73, 165, 257, 349, 441, 533, 625, 717, 809, 901, 997], g = '';
  gx.forEach(function (x) {
    g += '<path d="M' + x + '.5 75V435M' + x + '.5 457V672"/>';
  });
  NS('grid', g);

  /* candles: close y of each 4px bar from x = 9 */
  var c = [92,97,104,108,112,110,112,118,133,137,152,167,165,160,150,148,147,148,150,143,142,145,141,146,150,160,168,155,142,143,144,152,185,192,208,212,200,212,208,178,190,190,191,192,190,183,182,193,204,212,216,209,202,190,195,203,190,196,200,238,200,203,205,195,197,190,186,187,186,190,193,183,170,174,161,163,170,190,215,235,295,332,312,308,306,300,298,296,312,319,312,318,325,318,311,337,327,345,327,332,367,322,345,325,308,284,296,275,261,262,256,263,268,267,269,282,288,288,281,268,261,257,253,258,229,248,232,205,195,193,198,200,205,210,212,208,205,212,210,208,212,209,213,210,206,212,214,225,233,200,212,208,212,203,192,198,197,187,190,188,185,183,180,185,184,175,178,178,185,193,185,220,235,227,250,273,277,283,265,266,262,264,266,263,254,267,266,283,275,272,274,276,287,313,325,318,275,292,256,247,250,246,270,264,268,263,266,257,260,252,245,247,257,251,262,282,271,282,271,264,268,308,330,319,323,323,322,330,320,322,320,318,309,312,308,313,347,338,345,413,397,327,325,311];
  var wick = {157:[195,240],165:[165,200],233:[165,210],245:[195,245],329:[230,330],333:[295,345],337:[300,350],409:[310,372],413:[305,372],793:[270,342],869:[238,290],953:[305,350],961:[335,360],965:[340,420],969:[390,418],973:[320,400],981:[305,335]};
  var out = '';
  c.forEach(function (close, i) {
    var x = 9 + i * 4, open = i ? c[i - 1] : close - 3;
    var top = Math.min(open, close), bot = Math.max(open, close);
    var hi = top - (2 + (i * 13) % 6), lo = bot + 2 + (i * 17) % 7;
    if (wick[x]) { hi = wick[x][0]; lo = wick[x][1]; }
    if (bot - top < 2) { bot = top + 2; }
    var col = close < open ? '#32cd32' : '#d2691e';
    out += '<rect x="' + x + '" y="' + hi + '" width="1" height="' + (lo - hi) + '" fill="#000"/>';
    out += '<rect x="' + (x - 1) + '" y="' + top + '" width="3" height="' + (bot - top + 1) + '" fill="#000"/>';
    if (bot - top > 1) { out += '<rect x="' + x + '" y="' + (top + 1) + '" width="2" height="' + (bot - top - 1) + '" fill="' + col + '"/>'; }
  });
  NS('candles', out);

  function interp(keys, x) {
    for (var k = 0; k < keys.length - 1; k++) {
      if (x >= keys[k][0] && x <= keys[k + 1][0]) {
        var a = keys[k], b = keys[k + 1];
        return a[1] + (b[1] - a[1]) * (x - a[0]) / (b[0] - a[0]);
      }
    }
    return 0;
  }
  function rect(x, y, w, h, f) { return '<rect x="' + x + '" y="' + y + '" width="' + w + '" height="' + h + '" fill="' + f + '"/>'; }

  /* indicator 1 histogram */
  var k1 = [[181,1],[193,3],[197,1],[201,-5],[209,-13],[217,-3],[221,2],[237,1],[241,-2],[245,-8],[249,-10],[253,-5],[257,2],[265,4],[269,5],[285,6],[289,4],[293,5],[305,8],[313,11],[317,3],[321,-5],[325,-12],[329,-25],[333,-40],[337,-52],[341,-56],[345,-45],[353,-30],[365,-20],[373,-15],[377,-11],[389,-5],[411,-6],[413,-8],[421,1],[425,5],[432,10],[439,18],[446,22],[451,20],[461,12],[466,6],[470,4],[477,-1],[482,-2],[487,1],[492,3],[498,5],[510,8],[516,12],[522,18],[534,20],[539,15],[544,10],[549,4],[566,3],[573,1],[584,-1],[589,5],[597,-1],[603,-12],[606,6],[613,1],[625,5],[680,5],[684,2],[692,-3],[698,-12],[703,-18],[708,-25],[717,-30],[725,-20],[734,-10],[742,-6],[751,-3],[759,-5],[781,-10],[785,-18],[791,-18],[797,-7],[804,12],[810,16],[817,10],[821,4],[840,4],[847,7],[853,8],[857,6],[863,2],[870,-3],[878,-8],[891,-3],[895,-15],[900,-25],[912,-20],[921,-12],[929,-7],[938,1],[948,3],[955,-8],[963,-15],[970,-27],[974,-20],[976,-8],[981,4]];
  var h1 = '';
  for (var x = 181; x <= 981; x += 4) {
    var h = Math.round(interp(k1, x));
    if (h === 0) { continue; }
    var f = h >= 5 ? '#00ffff' : h > 0 ? '#0000dd' : h > -12 ? '#b22222' : '#ff4500';
    if (x >= 974 && x <= 977) { f = '#0000ff'; }
    h1 += h > 0 ? rect(x, 485 - h, 3, h, f) : rect(x, 485, 3, -h, f);
  }
  var rows = {
    531: [[177,194,'g'],[201,210,'r'],[213,230,'g'],[237,242,'g'],[249,289,'g'],[294,310,'l'],[316,320,'g'],[322,337,'r'],[339,377,'g'],[382,385,'g'],[401,406,'g'],[413,422,'g'],[425,450,'l'],[454,468,'g'],[473,477,'r'],[482,487,'g'],[490,497,'l'],[506,510,'g'],[514,522,'l'],[534,580,'g'],[585,590,'l'],[601,622,'g'],[639,646,'l'],[649,666,'g'],[670,674,'l'],[679,685,'g'],[691,718,'r'],[721,742,'g'],[749,755,'g'],[757,762,'r'],[764,774,'g'],[779,790,'r'],[793,798,'g'],[802,814,'l'],[818,847,'g'],[849,854,'l'],[857,866,'g'],[870,878,'r'],[883,890,'g'],[893,906,'r'],[908,929,'g'],[934,942,'l'],[946,951,'g'],[955,958,'r'],[960,963,'g'],[965,970,'r'],[974,982,'g']],
    537: [[177,194,'g'],[201,210,'r'],[213,244,'g'],[249,292,'g'],[298,313,'l'],[316,320,'g'],[322,378,'r'],[382,385,'g'],[401,406,'g'],[413,432,'g'],[437,466,'l'],[470,487,'g'],[490,495,'g'],[514,542,'l'],[546,601,'g'],[604,629,'g'],[634,679,'l'],[683,688,'g'],[694,742,'r'],[745,755,'g'],[762,779,'g'],[781,790,'r'],[793,847,'g'],[849,854,'l'],[857,889,'g'],[893,929,'r'],[934,951,'g'],[954,970,'r'],[974,982,'g']]
  };
  var cm = { g: '#808080', r: '#ff0000', l: '#7cfc00' };
  Object.keys(rows).forEach(function (y) {
    rows[y].forEach(function (s) { h1 += rect(s[0], +y - 1, s[1] - s[0], 2, cm[s[2]]); });
  });
  NS('w1', h1);

  /* indicator 2 histogram */
  var k2 = [[177,-10],[200,-12],[230,-14],[246,-18],[250,-8],[267,-2],[273,1],[294,3],[296,12],[303,18],[310,22],[315,12],[318,-1],[322,-15],[325,-25],[329,-50],[334,-58],[337,-45],[342,-30],[346,-28],[349,-20],[363,-16],[391,-12],[418,-10],[432,-3],[442,1],[463,2],[473,-1],[480,1],[491,10],[504,18],[515,20],[522,22],[532,18],[542,13],[577,10],[591,12],[597,4],[604,8],[625,10],[653,12],[667,15],[680,10],[687,5],[691,1],[694,-10],[698,-20],[701,-28],[719,-35],[721,-22],[734,-15],[781,-20],[793,-10],[802,-3],[810,1],[827,-5],[844,2],[855,5],[866,1],[870,-8],[878,-7],[883,5],[887,-1],[893,-22],[897,-30],[902,-22],[921,-13],[950,-15],[959,-18],[965,-29],[970,-22],[978,-8]];
  var h2 = '';
  for (x = 177; x <= 978; x += 4) {
    h = Math.round(interp(k2, x));
    if (h === 0) { continue; }
    f = h < -23 ? '#d2691e' : '#d3d3d3';
    h2 += h > 0 ? rect(x, 575 - h, 3, h, f) : rect(x, 575, 3, -h, f);
  }
  NS('w2', h2);

  /* indicator 3 squares */
  var r1 = [[204,211,'r'],[244,247,'r'],[323,384,'r'],[389,399,'r'],[408,411,'r'],[517,544,'b'],[549,552,'b'],[704,742,'r'],[749,752,'r'],[755,763,'r'],[776,795,'r'],[895,932,'r'],[952,971,'r']];
  var r2 = [[208,215,'r'],[244,254,'r'],[304,325,'b'],[325,351,'r'],[408,423,'r'],[425,463,'b'],[504,544,'b'],[596,611,'r'],[624,660,'b'],[673,676,'b'],[692,728,'r'],[779,800,'r'],[800,827,'b'],[868,915,'r'],[955,980,'r']];
  function sq(list, y) {
    var s = '';
    for (var x = 177; x <= 980; x += 4) {
      var col = '#c4c4c4';
      list.forEach(function (r) { if (x >= r[0] - 3 && x <= r[1]) { col = r[2] === 'r' ? '#ff0000' : '#0000ff'; } });
      s += rect(x, y, 3, 4, col);
    }
    return s;
  }
  NS('w3', sq(r1, 638) + sq(r2, 645));

  /* axes */
  function t(x, y, s, cl) { return '<text class="axis ' + (cl || 'price') + '" x="' + x + '" y="' + y + '">' + s + '</text>'; }
  var ax = '';
  [['2708.15',103],['2696.30',136],['2684.35',169],['2672.45',201],['2660.90',235],['2649.00',267],['2637.10',300],['2625.20',333],['2613.30',367],['2601.40',400],['2589.85',432]].forEach(function (p) {
    ax += t(1327, p[1] + 4, p[0]) + rect(1322, p[1], 3, 1, '#2f4f4f');
  });
  ax += rect(1323, 304, 43, 12, '#2f4f4f') + t(1327, 314, '2633.58', 'price cur');
  [['1.5988',463],['0.9823',538],['1.5716',554],['1.5543',628],['0.0',641],['0.5',642],['1',644],['100',658],['0.00',662],['-100',666]].forEach(function (p) {
    ax += t(1327, p[1] + 4, p[0]);
  });
  var dates = ['19 Apr 2018','19 Apr 22:00','20 Apr 15:00','23 Apr 08:00','24 Apr 01:00','24 Apr 17:00','25 Apr 10:00','26 Apr 03:00','26 Apr 19:00','27 Apr 12:00','30 Apr 05:00','30 Apr 21:00','1 May 14:00','2 May 07:00','3 May 00:00','3 May 16:00'];
  dates.forEach(function (d, i) {
    var x = 4 + i * 64;
    ax += t(x + 1, 685, d, 'date') + rect(x, 672, 1, 4, '#2f4f4f');
  });
  NS('axes', ax);

  /* condense tall labels to the narrow widths of the platform's bitmap font */
  function squeeze(sel, k) {
    document.querySelectorAll(sel).forEach(function (el) {
      el.setAttribute('textLength', (el.getComputedTextLength() * k).toFixed(1));
      el.setAttribute('lengthAdjust', 'spacingAndGlyphs');
    });
  }
  squeeze('.fib text', 0.876);
  squeeze('.legend', 0.89);
  squeeze('.axis.price', 0.85);
  squeeze('.axis.date', 0.89);

  /* connection bars */
  var cb = '';
  for (var i = 0; i < 11; i++) {
    cb += rect(i * 2 + 1, 1, 1, 7, '#6b7a10') + rect(i * 2 + 1, 8, 1, 8, '#1a5a8a');
  }
  NS('connbars', cb);
})();
```
